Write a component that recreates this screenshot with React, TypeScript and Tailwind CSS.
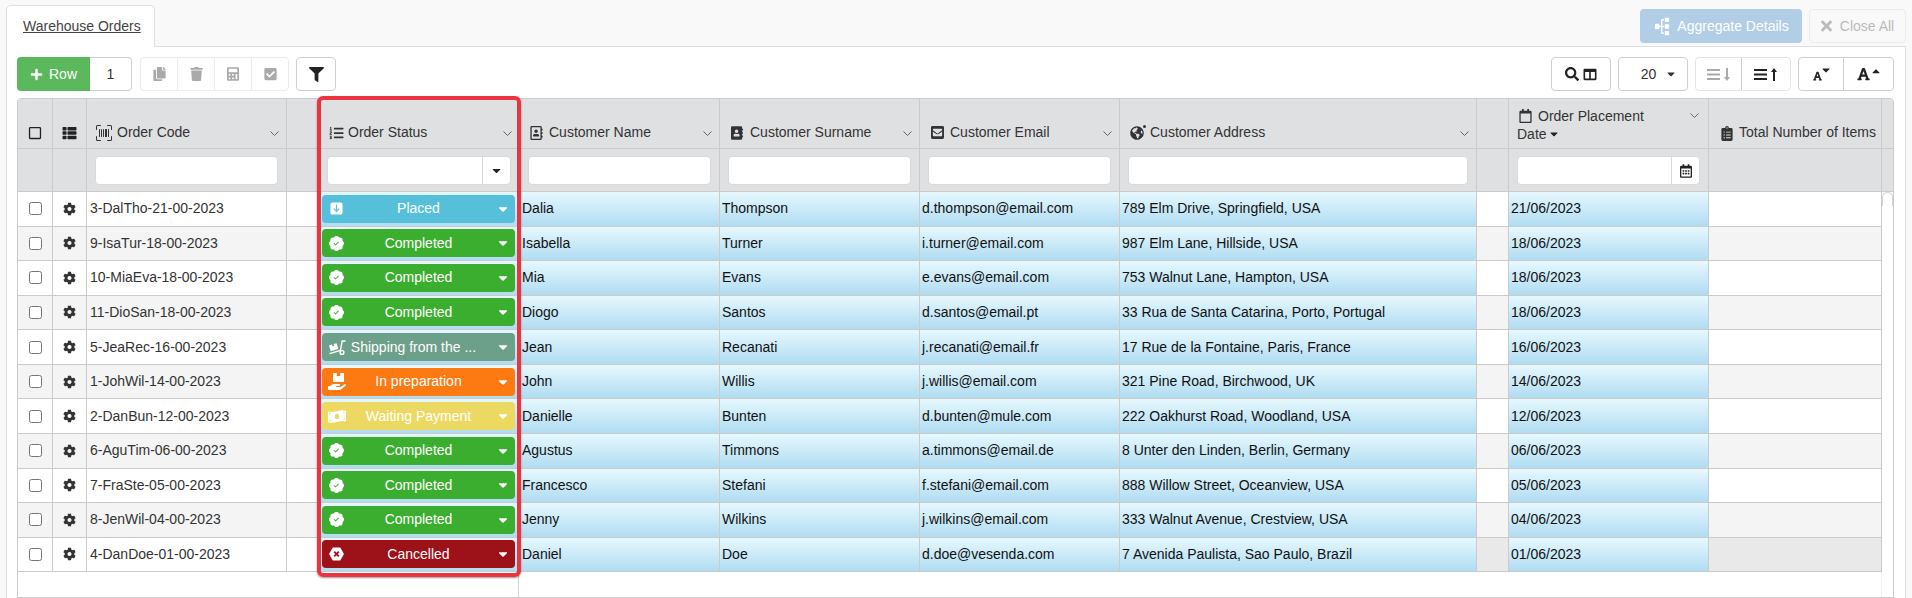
import React from 'react';
import {
    FaAddressBook,
    FaCalculator,
    FaCaretDown,
    FaCaretUp,
    FaCheckSquare,
    FaClipboardList,
    FaCog,
    FaColumns,
    FaCopy,
    FaEnvelopeSquare,
    FaFilter,
    FaFont,
    FaGlobeAmericas,
    FaHandHolding,
    FaListOl,
    FaMoneyBillWave,
    FaPlus,
    FaRegAddressBook,
    FaRegCalendar,
    FaRegCalendarAlt,
    FaRegSquare,
    FaSearch,
    FaSitemap,
    FaThList,
    FaTimes,
    FaTrash,
} from 'react-icons/fa';
import { BsPatchCheckFill, BsUpcScan } from 'react-icons/bs';

// --- Types ---
type Status = 'placed' | 'completed' | 'shipping' | 'preparation' | 'waiting' | 'cancelled';

type Order = {
    code: string;
    status: Status;
    name: string;
    surname: string;
    email: string;
    address: string;
    date: string;
};

// --- Data ---
const orders: Order[] = [
    { code: '3-DalTho-21-00-2023', status: 'placed', name: 'Dalia', surname: 'Thompson', email: 'd.thompson@email.com', address: '789 Elm Drive, Springfield, USA', date: '21/06/2023' },
    { code: '9-IsaTur-18-00-2023', status: 'completed', name: 'Isabella', surname: 'Turner', email: 'i.turner@email.com', address: '987 Elm Lane, Hillside, USA', date: '18/06/2023' },
    { code: '10-MiaEva-18-00-2023', status: 'completed', name: 'Mia', surname: 'Evans', email: 'e.evans@email.com', address: '753 Walnut Lane, Hampton, USA', date: '18/06/2023' },
    { code: '11-DioSan-18-00-2023', status: 'completed', name: 'Diogo', surname: 'Santos', email: 'd.santos@email.pt', address: '33 Rua de Santa Catarina, Porto, Portugal', date: '18/06/2023' },
    { code: '5-JeaRec-16-00-2023', status: 'shipping', name: 'Jean', surname: 'Recanati', email: 'j.recanati@email.fr', address: '17 Rue de la Fontaine, Paris, France', date: '16/06/2023' },
    { code: '1-JohWil-14-00-2023', status: 'preparation', name: 'John', surname: 'Willis', email: 'j.willis@email.com', address: '321 Pine Road, Birchwood, UK', date: '14/06/2023' },
    { code: '2-DanBun-12-00-2023', status: 'waiting', name: 'Danielle', surname: 'Bunten', email: 'd.bunten@mule.com', address: '222 Oakhurst Road, Woodland, USA', date: '12/06/2023' },
    { code: '6-AguTim-06-00-2023', status: 'completed', name: 'Agustus', surname: 'Timmons', email: 'a.timmons@email.de', address: '8 Unter den Linden, Berlin, Germany', date: '06/06/2023' },
    { code: '7-FraSte-05-00-2023', status: 'completed', name: 'Francesco', surname: 'Stefani', email: 'f.stefani@email.com', address: '888 Willow Street, Oceanview, USA', date: '05/06/2023' },
    { code: '8-JenWil-04-00-2023', status: 'completed', name: 'Jenny', surname: 'Wilkins', email: 'j.wilkins@email.com', address: '333 Walnut Avenue, Crestview, USA', date: '04/06/2023' },
    { code: '4-DanDoe-01-00-2023', status: 'cancelled', name: 'Daniel', surname: 'Doe', email: 'd.doe@vesenda.com', address: '7 Avenida Paulista, Sao Paulo, Brazil', date: '01/06/2023' },
];

const columns = 'grid grid-cols-[35px_34px_200px_32px_201px_200px_200px_200px_357px_32px_200px_173px_1fr]';
const blueCell = 'flex items-center pl-[2px] border-r border-b border-[#cbcbcb] bg-linear-to-b from-[#e6f8fe] to-[#b0dcf1] text-[#111] whitespace-nowrap overflow-hidden';

// --- Small drawn icons ---
const PlacedIcon = () => (
    <svg viewBox="0 0 14 14" className="w-[13px] h-[13px]">
        <rect x="0.5" y="0.5" width="13" height="13" rx="2" fill="#fff" />
        <path d="M7 3v7M4 7.2 7 10.2 10 7.2" fill="none" stroke="#56bfda" strokeWidth="1.2" />
    </svg>
);

const CancelledIcon = () => (
    <svg viewBox="0 0 16 15" className="w-[15px] h-[14px]">
        <path d="M4 .5h8L16 7.5l-4 7H4l-4-7z" fill="#fff" />
        <path d="M5.5 5 10.5 10M10.5 5 5.5 10" fill="none" stroke="#9d1118" strokeWidth="2" />
    </svg>
);

const ShippingIcon = () => (
    <svg viewBox="0 0 18 15" className="w-[18px] h-[15px]">
        <path d="M1 5.5 4 4.6l.6 1.8 1.6-.5L5.6 4.1 8.6 3.2l1.7 5.9-7.6 2.2z" fill="#fff" />
        <path d="M17.5 1H14.2L12.4 10.5 1.5 13.6" fill="none" stroke="#fff" strokeWidth="1.4" />
        <circle cx="14" cy="12.4" r="1.9" fill="none" stroke="#fff" strokeWidth="1.4" />
    </svg>
);

const PreparationIcon = () => (
    <span className="flex flex-col items-center">
        <svg viewBox="0 0 11 9" className="w-[11px] h-[9px] ml-[3px]">
            <path d="M0 0h3.8v3h3.4V0H11v9H0z" fill="#fff" />
        </svg>
        <FaHandHolding className="w-[18px] h-[16px] -mt-[8px] text-white" />
    </span>
);

const SortIcon = ({ up, className }: { up: boolean; className: string }) => (
    <svg viewBox="0 0 24 15" className={`w-[24px] h-[15px] ${className}`}>
        <path d="M0 2h13v2H0zM0 6.5h13v2H0zM0 11h13v2H0z" fill="currentColor" />
        <path d={up ? 'M20 1l3 4H21v9h-2V5H17z' : 'M20 14l3-4H21V1h-2v9H17z'} fill="currentColor" />
    </svg>
);

const Chevron = () => (
    <svg viewBox="0 0 9 5" className="w-[9px] h-[5px] shrink-0">
        <path d="M.5.5 4.5 4.5 8.5.5" fill="none" stroke="#666" strokeWidth="1" />
    </svg>
);

// --- Status pill ---
const statusStyles: Record<Status, { label: string; bg: string; text: string; icon: React.ReactNode }> = {
    placed: { label: 'Placed', bg: 'bg-[#56bfda]', text: '', icon: <PlacedIcon /> },
    completed: { label: 'Completed', bg: 'bg-[#3cae2f]', text: '', icon: <BsPatchCheckFill className="w-[15px] h-[15px]" /> },
    shipping: { label: 'Shipping from the ...', bg: 'bg-[#6da08a]', text: 'pr-[10px]', icon: <ShippingIcon /> },
    preparation: { label: 'In preparation', bg: 'bg-[#fd7912]', text: '', icon: <PreparationIcon /> },
    waiting: { label: 'Waiting Payment', bg: 'bg-[#ecd962]', text: '', icon: <FaMoneyBillWave className="w-[18px] h-[15px]" /> },
    cancelled: { label: 'Cancelled', bg: 'bg-[#9d1118]', text: '', icon: <CancelledIcon /> },
};

const StatusPill = ({ status }: { status: Status }) => {
    const style = statusStyles[status];
    return (
        <div className={`grid grid-cols-[28px_1fr_28px] items-center w-[193px] h-7 rounded-[4px] text-white ${style.bg}`}>
            <span className="flex justify-center pl-px">{style.icon}</span>
            <span className={`text-center whitespace-nowrap overflow-hidden ${style.text}`}>{style.label}</span>
            <FaCaretDown className="w-[14px] h-[14px] ml-[9px]" />
        </div>
    );
};

// --- Header pieces ---
const HeaderCell = ({ icon, label, inset }: { icon: React.ReactNode; label: string; inset: string }) => (
    <div className={`flex items-end justify-between pr-[7px] pb-[5px] border-r border-b border-[#cbcbcb] ${inset}`}>
        <span className="flex items-center whitespace-nowrap">
            {icon}
            {label}
        </span>
        <span className="pb-[7px]"><Chevron /></span>
    </div>
);

const FilterInput = ({ addon }: { addon?: React.ReactNode }) => (
    <div className="flex items-center pl-2 pr-[8px] pt-px border-r border-b border-[#cbcbcb]">
        <div className="flex w-full h-[29px] bg-white border border-[#d9d9d9] rounded-[4px]">
            <input className="flex-1 min-w-0 outline-none" />
            {addon && (
                <span className="flex items-center justify-center w-[28px] border-l border-[#d9d9d9] text-[#222]">{addon}</span>
            )}
        </div>
    </div>
);

const EmptyHead = () => <div className="border-r border-b border-[#cbcbcb]" />;

const ToolButton = ({ className, children }: { className: string; children: React.ReactNode }) => (
    <div className={`flex items-center justify-center h-[34px] ${className}`}>{children}</div>
);

// --- Toolbar ---
const Toolbar = () => (
    <div className="flex items-center justify-between mb-[7px]">
        <div className="flex items-center">
            <ToolButton className="w-[73px] gap-[6px] bg-[#5cb85c] text-white rounded-l-[4px]">
                <FaPlus className="w-[13px] h-[13px]" /> Row
            </ToolButton>
            <ToolButton className="w-[42px] bg-white border border-l-0 border-[#d0d0d0] rounded-r-[4px] text-[#333]">1</ToolButton>
            <div className="flex ml-2 border border-[#ececec] rounded-[4px] text-[#aaa]">
                <ToolButton className="w-[37px] !h-[32px] border-r border-[#ececec]"><FaCopy className="w-[13px] h-[14px]" /></ToolButton>
                <ToolButton className="w-[37px] !h-[32px] border-r border-[#ececec]"><FaTrash className="w-[13px] h-[14px]" /></ToolButton>
                <ToolButton className="w-[37px] !h-[32px] border-r border-[#ececec]"><FaCalculator className="w-[12px] h-[14px]" /></ToolButton>
                <ToolButton className="w-[36px] !h-[32px]"><FaCheckSquare className="w-[13px] h-[14px]" /></ToolButton>
            </div>
            <ToolButton className="w-[40px] ml-[7px] bg-white border border-[#cfcfcf] rounded-[4px] text-[#222]">
                <FaFilter className="w-[15px] h-[15px]" />
            </ToolButton>
        </div>
        <div className="flex items-center">
            <ToolButton className="w-[60px] gap-[4px] border border-[#cfcfcf] rounded-[4px] text-[#222]">
                <FaSearch className="w-[14px] h-[14px]" />
                <FaColumns className="w-[14px] h-[13px]" />
            </ToolButton>
            <ToolButton className="w-[70px] ml-[7px] gap-[11px] pl-[10px] border border-[#cfcfcf] rounded-[4px] text-[#333]">
                20 <FaCaretDown className="w-[8px] h-[12px]" />
            </ToolButton>
            <div className="flex ml-[7px] border border-[#e4e4e4] rounded-[4px]">
                <ToolButton className="w-[46px] !h-[32px] border-r border-[#cfcfcf]"><SortIcon up={false} className="text-[#aaa]" /></ToolButton>
                <ToolButton className="w-[48px] !h-[32px]"><SortIcon up className="text-[#222]" /></ToolButton>
            </div>
            <div className="flex ml-[7px] border border-[#cfcfcf] rounded-[4px] text-[#222]">
                <ToolButton className="w-[45px] !h-[32px] border-r border-[#cfcfcf]">
                    <FaFont className="w-[9px] h-[10px] mt-[4px]" />
                    <FaCaretDown className="w-[8px] h-[12px] mb-[8px]" />
                </ToolButton>
                <ToolButton className="w-[49px] !h-[32px] gap-[2px]">
                    <FaFont className="w-[13px] h-[14px]" />
                    <FaCaretUp className="w-[8px] h-[12px] mb-[7px]" />
                </ToolButton>
            </div>
        </div>
    </div>
);

// --- Table ---
const OrdersTable = () => (
    <div className="relative flex-1 flex flex-col border border-[#cbcbcb] rounded-t-[4px] text-[#333]">
        <div className="bg-[#dfe0e2] rounded-t-[4px]">
            <div className={`${columns} h-[50px]`}>
                <div className="flex items-end justify-center pb-[8px] border-r border-b border-[#cbcbcb]">
                    <FaRegSquare className="w-[14px] h-[14px] text-[#222]" />
                </div>
                <div className="flex items-end justify-center pb-[8px] border-r border-b border-[#cbcbcb]">
                    <FaThList className="w-[15px] h-[14px] text-[#222]" />
                </div>
                <HeaderCell inset="pl-2" icon={<BsUpcScan className="w-[18px] h-[16px] mr-1" />} label="Order Code" />
                <EmptyHead />
                <HeaderCell inset="pl-[10px]" icon={<FaListOl className="w-[15px] h-[14px] mr-[4px]" />} label="Order Status" />
                <HeaderCell inset="pl-[10px]" icon={<FaRegAddressBook className="w-[13px] h-[14px] mr-[6px]" />} label="Customer Name" />
                <HeaderCell inset="pl-[11px]" icon={<FaAddressBook className="w-[12px] h-[14px] mr-[7px]" />} label="Customer Surname" />
                <HeaderCell inset="pl-[11px]" icon={<FaEnvelopeSquare className="w-[13px] h-[15px] mr-[6px]" />} label="Customer Email" />
                <HeaderCell
                    inset="pl-[10px]"
                    icon={
                        <span className="relative mr-[6px]">
                            <FaGlobeAmericas className="w-[14px] h-[14px]" />
                            {/* Small dot beside the globe */}
                            <span className="absolute -top-[1px] -right-[2px] w-[3px] h-[3px] rounded-full bg-[#333]" />
                        </span>
                    }
                    label="Customer Address"
                />
                <EmptyHead />
                <div className="flex justify-between pl-2 pr-[9px] pt-[8px] border-r border-b border-[#cbcbcb] leading-[18px]">
                    <div>
                        <div className="flex items-center gap-[6px] pl-[2px]">
                            <FaRegCalendar className="w-[13px] h-[14px]" /> Order Placement
                        </div>
                        <div className="flex items-center gap-[3px]">Date <FaCaretDown className="w-[8px] h-[12px] text-[#222]" /></div>
                    </div>
                    <span className="pt-[6px]"><Chevron /></span>
                </div>
                <div className="flex items-end gap-[6px] pl-[12px] pb-[5px] border-r border-b border-[#cbcbcb] whitespace-nowrap">
                    <FaClipboardList className="w-[12px] h-[15px] mb-[2px]" /> Total Number of Items
                </div>
                <div className="border-b border-[#cbcbcb]" />
            </div>
            <div className={`${columns} h-[43px]`}>
                <EmptyHead />
                <EmptyHead />
                <FilterInput />
                <EmptyHead />
                <FilterInput addon={<FaCaretDown className="w-[9px] h-[13px]" />} />
                <FilterInput />
                <FilterInput />
                <FilterInput />
                <FilterInput />
                <EmptyHead />
                <FilterInput addon={<FaRegCalendarAlt className="w-[12px] h-[14px]" />} />
                <EmptyHead />
                <div className="border-b border-[#cbcbcb]" />
            </div>
        </div>

        {orders.map((order, i) => {
            const plain = i % 2 === 1 ? 'bg-[#f4f4f4]' : 'bg-white';
            const right = i === 10 ? 'bg-[#e9e9e9]' : plain;
            const cell = 'border-r border-b border-[#cbcbcb]';
            return (
                <div key={order.code} className={`${columns} h-[34.57px]`}>
                    <div className={`flex items-center justify-center ${cell} ${plain}`}>
                        <input type="checkbox" readOnly className="w-[13px] h-[13px]" />
                    </div>
                    <div className={`flex items-center justify-center ${cell} ${plain}`}>
                        <FaCog className="w-[13px] h-[14px] text-[#333]" />
                    </div>
                    <div className={`flex items-center pl-[3px] ${cell} ${plain}`}>{order.code}</div>
                    <div className={`${cell} ${plain}`} />
                    <div className={`flex items-center pl-[3px] ${cell} bg-linear-to-b from-[#e6f8fe] to-[#b0dcf1]`}>
                        <StatusPill status={order.status} />
                    </div>
                    <div className={blueCell}>{order.name}</div>
                    <div className={blueCell}>{order.surname}</div>
                    <div className={blueCell}>{order.email}</div>
                    <div className={blueCell}>{order.address}</div>
                    <div className={`${cell} ${right}`} />
                    <div className={blueCell}>{order.date}</div>
                    <div className={`${cell} ${right}`} />
                    <div className="bg-white">
                        {i === 0 && <div className="h-[14px] border border-b-0 border-[#d5d5d5] rounded-t-full" />}
                    </div>
                </div>
            );
        })}

        <div className={`${columns} flex-1`}>
            <div className="col-span-5 mr-px border-r border-[#d5d5d5]" />
            <div className="col-span-7 border-r border-[#efefef]" />
        </div>

        {/* Highlight frame round the status column */}
        <div className="absolute left-[299px] top-[-3px] w-[204px] h-[481px] border-4 border-[#ea3440] rounded-[6px] shadow-[0_1px_2px_rgba(0,0,0,0.4)]" />
    </div>
);

// --- Page ---
export default function App() {
    return (
        <div className="flex flex-col h-[598px] overflow-hidden bg-[#f9f9f9] text-[14px] font-['Liberation_Sans',Arial,sans-serif]">
            <div className="flex items-end justify-between h-[46px] px-[6px]">
                <div className="relative z-10 flex items-center w-[149px] h-[42px] -mb-px pl-4 bg-white border border-b-0 border-[#dedede] rounded-t-[5px] text-[#444] underline">
                    Warehouse Orders
                </div>
                <div className="flex self-start gap-[7px] mt-[9px]">
                    <div className="flex items-center justify-center gap-[6px] w-[162px] h-[34px] bg-[#b2cde6] text-white rounded-[4px]">
                        <FaSitemap className="w-[18px] h-[15px] -rotate-90" /> Aggregate Details
                    </div>
                    <div className="flex items-center justify-center gap-[8px] w-[97px] h-[34px] border border-[#ececec] rounded-[4px] text-[#bbb]">
                        <FaTimes className="w-[11px] h-[16px]" /> Close All
                    </div>
                </div>
            </div>
            <div className="flex-1 flex flex-col mx-[6px] pt-[10px] pl-[10px] pr-[11px] bg-white border border-b-0 border-[#dedede]">
                <Toolbar />
                <OrdersTable />
            </div>
        </div>
    );
}
